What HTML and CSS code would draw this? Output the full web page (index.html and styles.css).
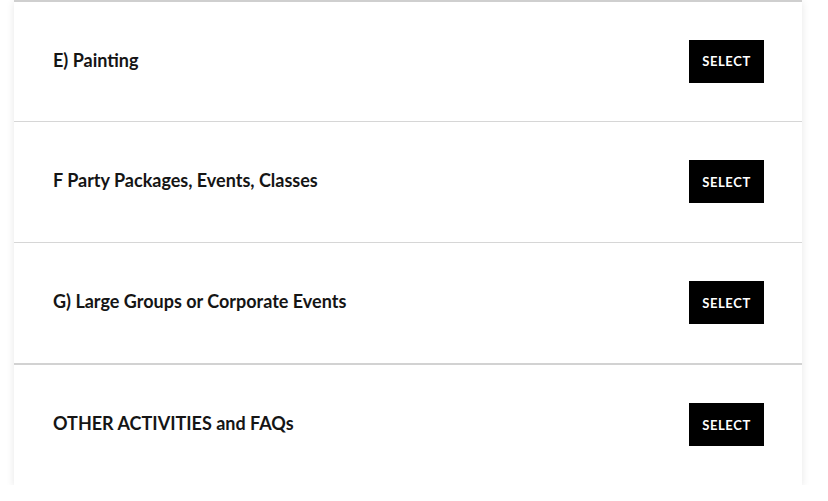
FILE: index.html
```html
<!DOCTYPE html>
<html>
<head>
<meta charset="utf-8">
<link rel="stylesheet" href="styles.css">
</head>
<body>
<div class="card">
  <div class="row first"><span class="label">E) Painting</span><a class="btn">SELECT</a></div>
  <div class="row"><span class="label">F Party Packages, Events, Classes</span><a class="btn">SELECT</a></div>
  <div class="row thick"><span class="label">G) Large Groups or Corporate Events</span><a class="btn">SELECT</a></div>
  <div class="row last"><span class="label">OTHER ACTIVITIES and FAQs</span><a class="btn">SELECT</a></div>
</div>
</body>
</html>
```
FILE: styles.css
```css
html, body {
  margin: 0;
  padding: 0;
  background: #fff;
}
body {
  padding-left: 14px;
  font-family: Lato, "Liberation Sans", sans-serif;
}
.card {
  width: 788px;
  background: #fff;
  border-top: 2px solid #cfcfcf;
  box-shadow: 0 2px 8px rgba(0, 0, 0, 0.10);
}
.row {
  box-sizing: border-box;
  height: 121px;
  display: flex;
  align-items: center;
  justify-content: space-between;
  padding: 0 38px 0 39px;
  border-bottom: 1px solid #d6d6d6;
}
.row.first {
  height: 120px;
}
.row.thick {
  height: 122px;
  border-bottom: 2px solid #d2d2d2;
}
.row.last {
  border-bottom: none;
  height: 120px;
}
.label {
  font-size: 18px;
  font-weight: 700;
  color: #151515;
  margin-top: -4px;
}
.btn {
  display: flex;
  align-items: center;
  justify-content: center;
  width: 75px;
  height: 43px;
  margin-top: -1px;
  background: #000;
  color: #fff;
  font-size: 13px;
  font-weight: 700;
  letter-spacing: 0.6px;
}
```
